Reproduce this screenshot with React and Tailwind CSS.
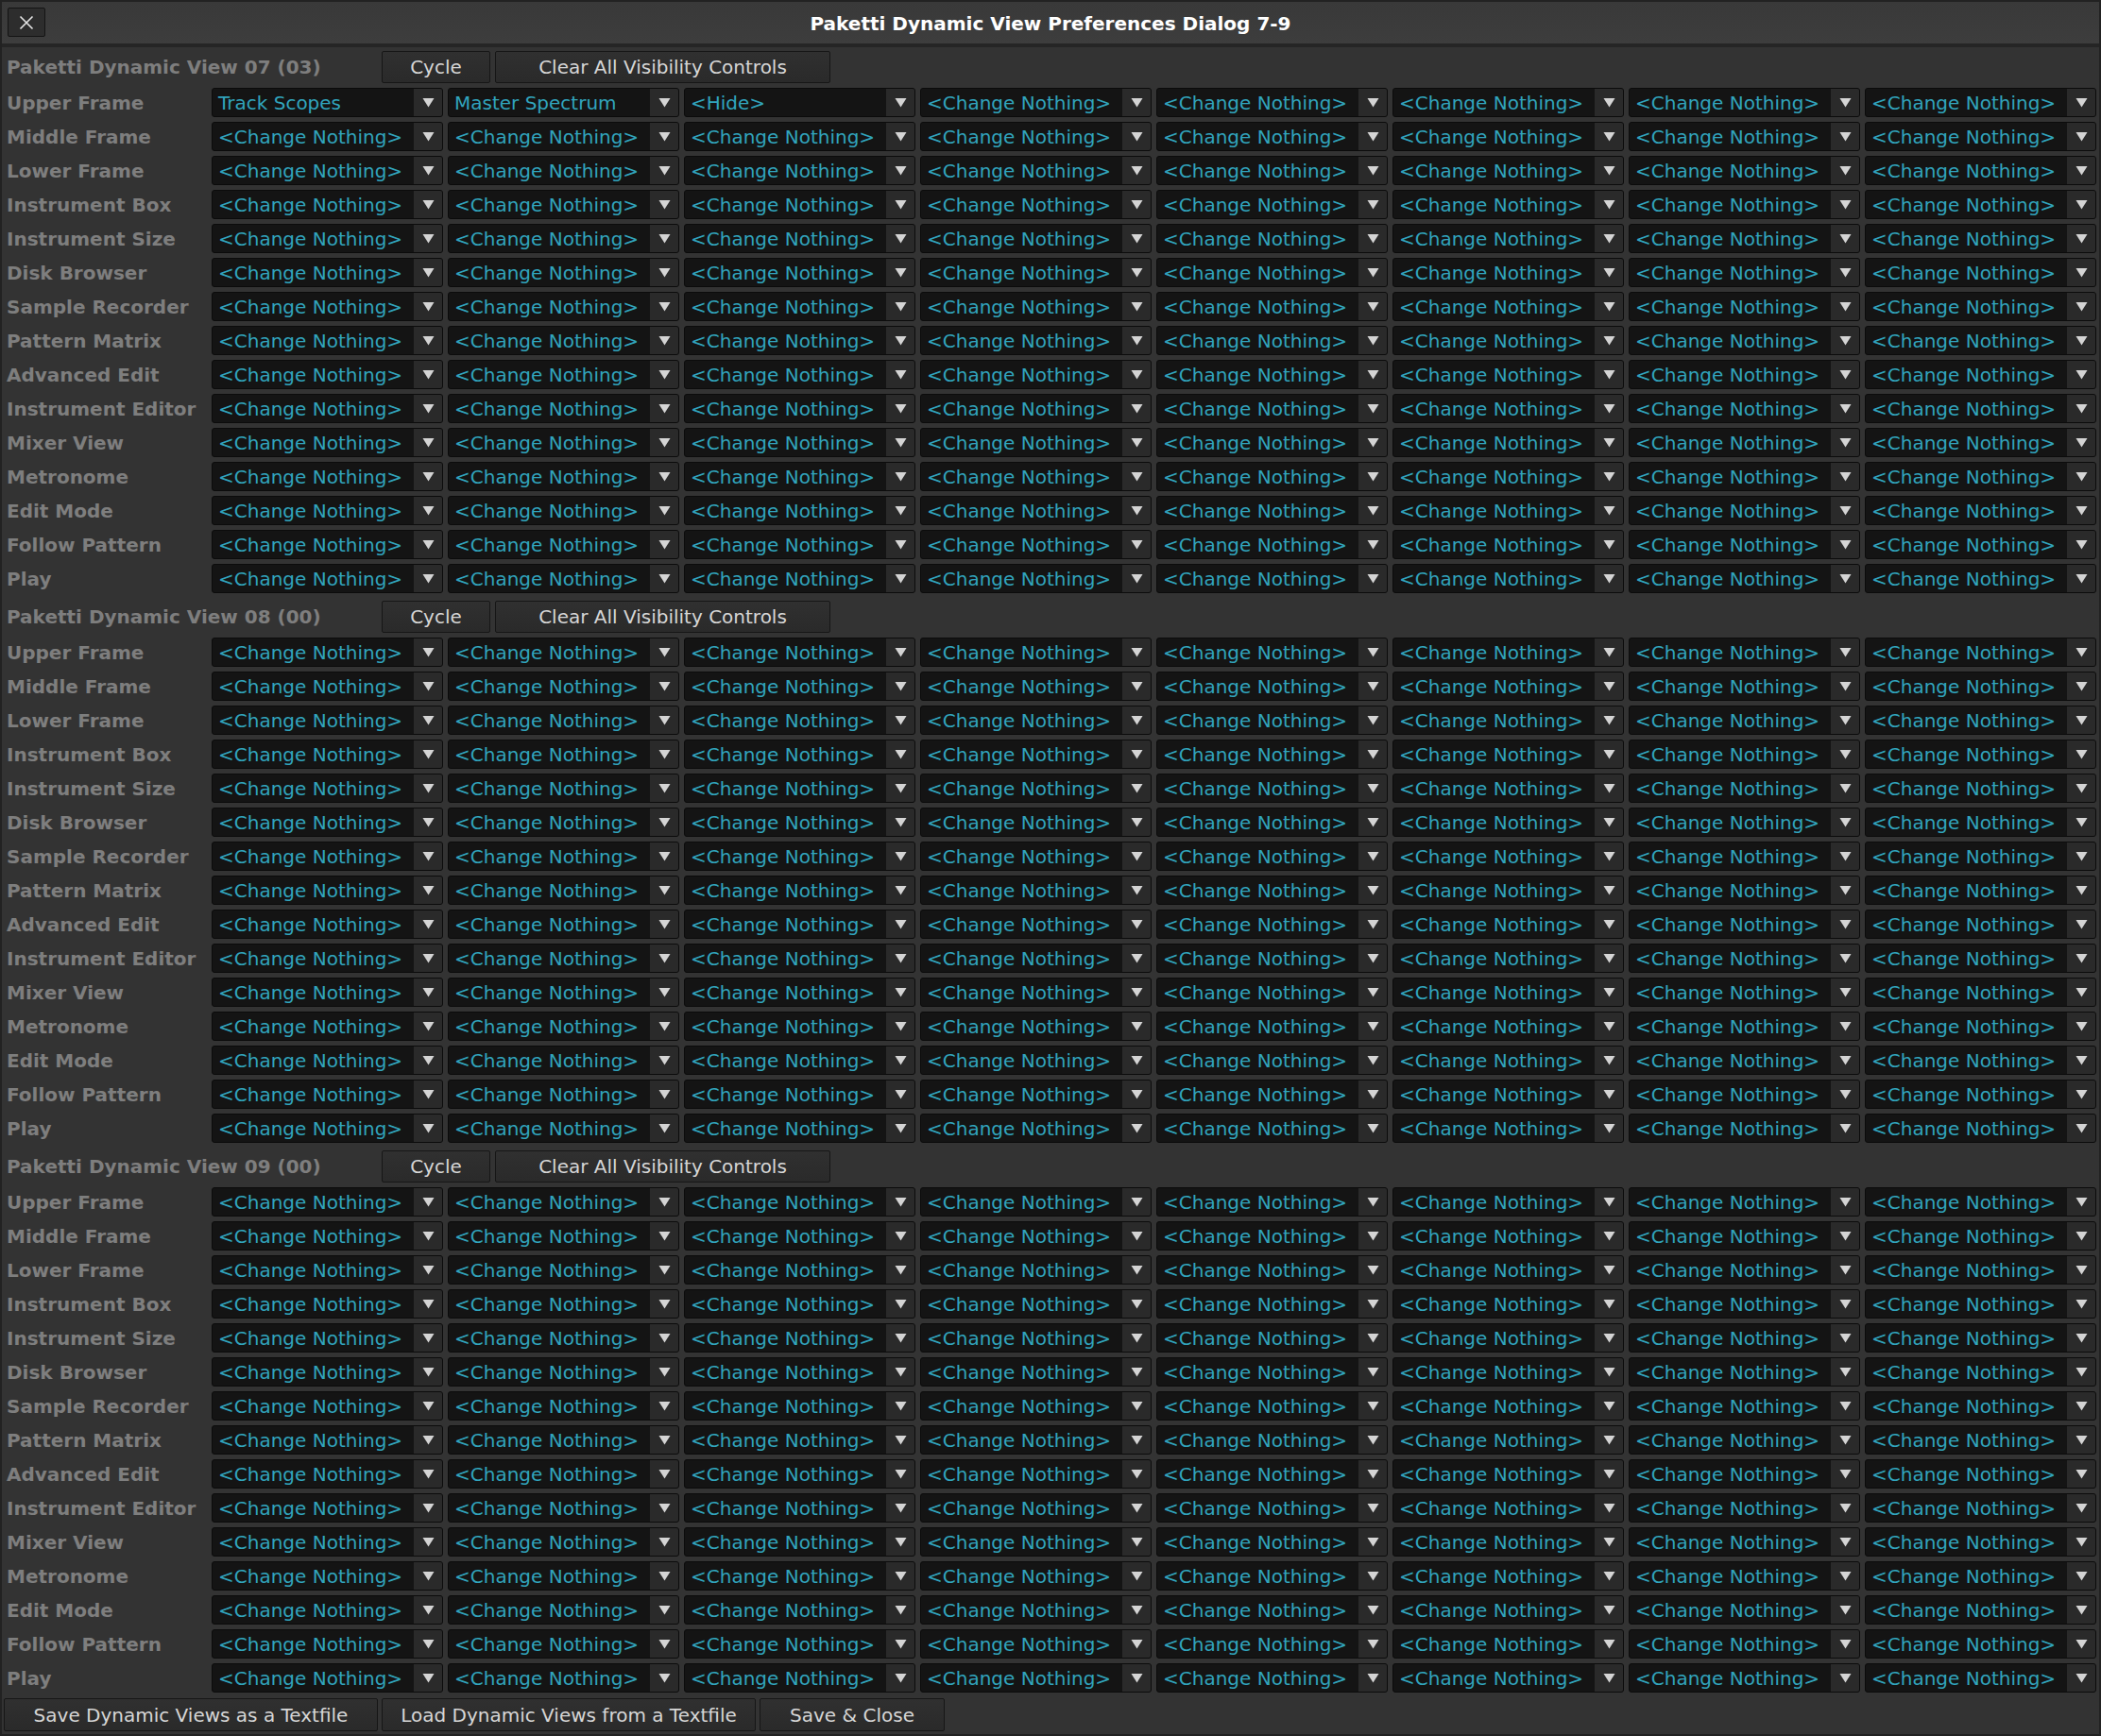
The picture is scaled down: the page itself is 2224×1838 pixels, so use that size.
import React from 'react';

const ROWS = [
  'Upper Frame',
  'Middle Frame',
  'Lower Frame',
  'Instrument Box',
  'Instrument Size',
  'Disk Browser',
  'Sample Recorder',
  'Pattern Matrix',
  'Advanced Edit',
  'Instrument Editor',
  'Mixer View',
  'Metronome',
  'Edit Mode',
  'Follow Pattern',
  'Play',
];

const NOTHING = '<Change Nothing>';

const SECTIONS = [
  {
    title: 'Paketti Dynamic View 07 (03)',
    overrides: { 'Upper Frame': ['Track Scopes', 'Master Spectrum', '<Hide>'] },
  },
  { title: 'Paketti Dynamic View 08 (00)', overrides: {} },
  { title: 'Paketti Dynamic View 09 (00)', overrides: {} },
];

const Button = ({ children, className = '' }) => (
  <button
    className={`h-full rounded-[2px] border border-[#161616] bg-gradient-to-b from-[#303030] to-[#2a2a2a] text-[20px] text-[#d6d6d6] ${className}`}
  >
    {children}
  </button>
);

const Dropdown = ({ value }) => (
  <div className="flex h-[31px] w-[245px] overflow-hidden rounded-[3px] border border-[#0b0b0b] bg-[#141414]">
    <div className="flex-1 truncate pl-[6px] pt-[1px] text-[20px] leading-[29px] text-[#31a4bd]">{value}</div>
    <div className="flex w-[30px] items-center justify-center bg-[#2a2a2a]">
      <svg width="13" height="11" viewBox="0 0 13 11">
        <path d="M0.5 1 H12.5 L6.5 10.5 Z" fill="#d4d4d4" />
      </svg>
    </div>
  </div>
);

const Section = ({ section }) => (
  <div className="flex flex-col gap-[5px]">
    <div className="flex h-[34px] items-center">
      <div className="w-[402px] pl-[5px] text-[20px] font-bold text-[#7e7e7e]">{section.title}</div>
      <div className="flex h-full gap-[5px]">
        <Button className="w-[115px]">Cycle</Button>
        <Button className="w-[355px]">Clear All Visibility Controls</Button>
      </div>
    </div>
    {ROWS.map((row) => {
      const values = section.overrides[row] || [];
      return (
        <div key={row} className="flex h-[31px] items-center">
          <div className="w-[222px] pl-[5px] pt-[1px] text-[20px] font-bold text-[#7e7e7e]">{row}</div>
          <div className="flex gap-[5px]">
            {Array.from({ length: 8 }).map((_, i) => (
              <Dropdown key={i} value={values[i] || NOTHING} />
            ))}
          </div>
        </div>
      );
    })}
  </div>
);

export default function App() {
  return (
    <div
      className="flex h-[1838px] w-[2224px] flex-col border-2 border-[#222222] bg-[#333333]"
      style={{ fontFamily: '"DejaVu Sans", "Liberation Sans", sans-serif' }}
    >
      <div className="relative flex h-[44px] items-center justify-center bg-gradient-to-b from-[#393939] to-[#3d3d3d]">
        <button className="absolute left-[6px] top-[6px] flex h-[31px] w-[40px] items-center justify-center rounded-[2px] border border-[#141414] bg-[#2d2d2d]">
          <svg width="16" height="16" viewBox="0 0 16 16">
            <path d="M1.5 1.5 L14.5 14.5 M14.5 1.5 L1.5 14.5" stroke="#e6e6e6" strokeWidth="1.6" />
          </svg>
        </button>
        <div className="pt-[2px] text-[20px] font-bold text-white">Paketti Dynamic View Preferences Dialog 7-9</div>
      </div>
      <div className="h-[4px] bg-[#252525]" />
      <div className="flex flex-1 flex-col gap-[8px] pt-[4px]">
        {SECTIONS.map((s) => (
          <Section key={s.title} section={s} />
        ))}
        <div className="mt-[-2px] flex h-[35px] gap-[4px] pl-[2px]">
          <Button className="w-[396px]">Save Dynamic Views as a Textfile</Button>
          <Button className="w-[396px]">Load Dynamic Views from a Textfile</Button>
          <Button className="w-[196px]">Save &amp; Close</Button>
        </div>
      </div>
    </div>
  );
}
